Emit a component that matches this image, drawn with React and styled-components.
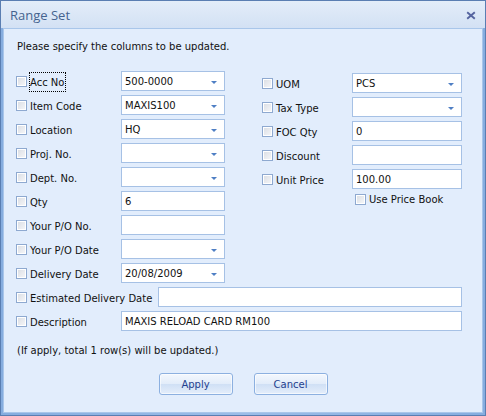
import styled, { createGlobalStyle } from 'styled-components';

const GlobalStyle = createGlobalStyle`
  html, body {
    margin: 0;
    padding: 0;
    background: #ffffff;
  }
  body {
    font-family: "DejaVu Sans", sans-serif;
    font-size: 10px;
    color: #111;
  }
`;

const Window = styled.div`
  width: 486px;
  height: 416px;
  box-sizing: border-box;
  border: 1px solid #5a7eb2;
  background: #88aedf;
  display: flex;
  flex-direction: column;
`;

const TitleBar = styled.div`
  height: 27px;
  flex: none;
  background: linear-gradient(#e3edf9, #d3e1f4);
  display: flex;
  align-items: center;
  justify-content: space-between;
  padding: 0 9px 0 9px;
  font-family: "Open Sans", sans-serif;
  font-size: 13px;
  color: #45638f;
`;

const CloseBtn = styled.svg`
  width: 10px;
  height: 9px;
  margin-top: 1px;
`;

const Frame = styled.div`
  flex: 1;
  display: flex;
  padding: 0 2px 2px 2px;
  background: linear-gradient(90deg, #86addf, #9cbde8 50%, #86addf);
`;

const Panel = styled.div`
  flex: 1;
  border: 1px solid #a9c6ea;
  background: #e2edfc;
  padding: 11px 0 0 12px;
  display: flex;
  flex-direction: column;
`;

const Intro = styled.div`
  line-height: 14px;
  margin-left: 1px;
`;

const Columns = styled.div`
  display: flex;
  margin-top: 15px;
  gap: 37px;
`;

const Column = styled.div`
  display: flex;
  flex-direction: column;
  margin-top: ${p => p.$offset || 0}px;
`;

const Row = styled.div`
  display: flex;
  align-items: center;
  height: 24px;
`;

const LabelCell = styled.div`
  width: ${p => p.$w}px;
  flex: none;
  display: flex;
  align-items: center;
`;

const Check = styled.span`
  width: 11px;
  height: 11px;
  box-sizing: border-box;
  border: 1px solid #8ea9d0;
  background: linear-gradient(135deg, #d9dde3, #f7f8fa);
  box-shadow: inset 0 0 0 1px #ffffff;
  flex: none;
  margin-right: 2px;
  margin-top: 1px;
`;

const Label = styled.span`
  border: 1px ${p => (p.$focused ? 'dotted #000' : 'solid transparent')};
  height: 20px;
  box-sizing: border-box;
  display: flex;
  align-items: center;
  padding-right: 1px;
  margin-top: 2px;
`;

const Field = styled.div`
  width: ${p => p.$w}px;
  height: 20px;
  box-sizing: border-box;
  border: 1px solid #a6c1e5;
  background: #ffffff;
  display: flex;
  align-items: center;
  padding: 0 7px 0 3px;
  white-space: nowrap;
`;

const FieldText = styled.span`
  flex: 1;
`;

const Arrow = styled.span`
  width: 0;
  height: 0;
  border-left: 3px solid transparent;
  border-right: 3px solid transparent;
  border-top: 3px solid #4f7fc4;
  margin-top: 2px;
`;

const SmallRow = styled.div`
  display: flex;
  align-items: center;
  height: 16px;
  padding-left: 93px;
  gap: 1px;
`;

const Note = styled.div`
  margin: 11px 0 0 1px;
  line-height: 14px;
`;

const Buttons = styled.div`
  display: flex;
  justify-content: center;
  gap: 21px;
  margin: 15px 0 0 -12px;
`;

const Button = styled.button`
  width: 74px;
  height: 22px;
  border: 1px solid #8cb0e0;
  border-radius: 3px;
  background: linear-gradient(#f3f7fd 0%, #e3edfa 48%, #d0e0f5 52%, #e4eefb 100%);
  box-shadow: inset 0 0 0 1px rgba(255, 255, 255, 0.6);
  font-family: "DejaVu Sans", sans-serif;
  font-size: 10px;
  color: #243f8e;
  padding: 0;
`;

const Check2 = ({ label, focused, w }) => (
  <LabelCell $w={w}>
    <Check />
    <Label $focused={focused}>{label}</Label>
  </LabelCell>
);

const FormRow = ({ label, value, combo, lw, fw, focused }) => (
  <Row>
    <Check2 label={label} focused={focused} w={lw} />
    <Field $w={fw}>
      <FieldText>{value}</FieldText>
      {combo && <Arrow />}
    </Field>
  </Row>
);

const leftRows = [
  { label: 'Acc No', value: '500-0000', combo: true, focused: true },
  { label: 'Item Code', value: 'MAXIS100', combo: true },
  { label: 'Location', value: 'HQ', combo: true },
  { label: 'Proj. No.', value: '', combo: true },
  { label: 'Dept. No.', value: '', combo: true },
  { label: 'Qty', value: '6' },
  { label: 'Your P/O No.', value: '' },
  { label: 'Your P/O Date', value: '', combo: true },
  { label: 'Delivery Date', value: '20/08/2009', combo: true },
];

const rightRows = [
  { label: 'UOM', value: 'PCS', combo: true },
  { label: 'Tax Type', value: '', combo: true },
  { label: 'FOC Qty', value: '0' },
  { label: 'Discount', value: '' },
  { label: 'Unit Price', value: '100.00' },
];

export default function App() {
  return (
    <>
      <GlobalStyle />
      <Window>
        <TitleBar>
          <span>Range Set</span>
          <CloseBtn viewBox="0 0 10 9">
            <path d="M1.2 1.2 L8.8 7.8 M8.8 1.2 L1.2 7.8" stroke="#55649f" strokeWidth="1.9" />
          </CloseBtn>
        </TitleBar>
        <Frame>
          <Panel>
            <Intro>Please specify the columns to be updated.</Intro>
            <Columns>
              <Column>
                {leftRows.map(r => (
                  <FormRow key={r.label} {...r} lw={105} fw={104} />
                ))}
              </Column>
              <Column $offset={2}>
                {rightRows.map(r => (
                  <FormRow key={r.label} {...r} lw={90} fw={110} />
                ))}
                <SmallRow>
                  <Check />
                  <span>Use Price Book</span>
                </SmallRow>
              </Column>
            </Columns>
            <FormRow label="Estimated Delivery Date" value="" lw={142} fw={304} />
            <FormRow label="Description" value="MAXIS RELOAD CARD RM100" lw={105} fw={341} />
            <Note>(If apply, total 1 row(s) will be updated.)</Note>
            <Buttons>
              <Button>Apply</Button>
              <Button>Cancel</Button>
            </Buttons>
          </Panel>
        </Frame>
      </Window>
    </>
  );
}
